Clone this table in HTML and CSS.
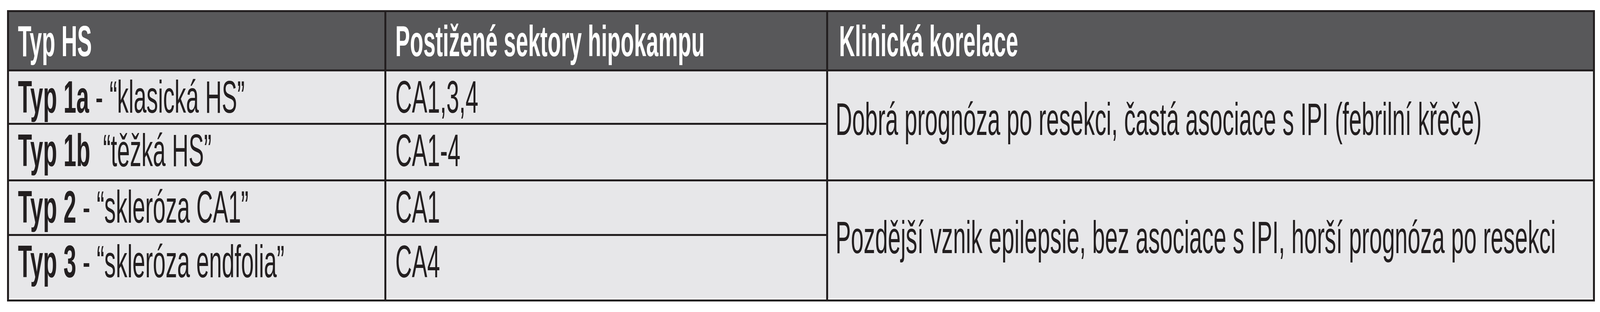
FILE: index.html
```html
<!DOCTYPE html>
<html lang="cs">
<head>
<meta charset="utf-8">
<title>Typy HS</title>
<link rel="stylesheet" href="styles.css">
</head>
<body>
<div class="table">
  <div class="cell head c1"><span class="t">Typ HS</span></div>
  <div class="cell head c2"><span class="t">Postižené sektory hipokampu</span></div>
  <div class="cell head c3"><span class="t">Klinická korelace</span></div>

  <div class="cell c1"><span class="t"><b>Typ 1a</b> - “klasická HS”</span></div>
  <div class="cell c2"><span class="t">CA1,3,4</span></div>
  <div class="cell c3 merged top"><span class="t">Dobrá prognóza po resekci, častá asociace s IPI (febrilní křeče)</span></div>

  <div class="cell c1"><span class="t"><b>Typ 1b</b>&nbsp; “těžká HS”</span></div>
  <div class="cell c2"><span class="t">CA1-4</span></div>

  <div class="cell c1"><span class="t"><b>Typ 2</b> - “skleróza CA1”</span></div>
  <div class="cell c2"><span class="t">CA1</span></div>
  <div class="cell c3 merged bottom last"><span class="t">Pozdější vznik epilepsie, bez asociace s IPI, horší prognóza po resekci</span></div>

  <div class="cell c1 last"><span class="t"><b>Typ 3</b> - “skleróza endfolia”</span></div>
  <div class="cell c2 last"><span class="t">CA4</span></div>
</div>
</body>
</html>
```

FILE: styles.css
```css
:root {
  --vr: 1;
}

@media (max-width: 6700px) {
  :root { --vr: 0.8; }
}

@media (max-width: 5500px) {
  :root { --vr: 0.7; }
}

@media (max-width: 4200px) {
  :root { --vr: 0.6072; }
}

html, body {
  margin: 0;
  padding: 0;
  background: #ffffff;
}

body {
  font-family: "Liberation Sans", Arial, sans-serif;
  color: #231f20;
}

.table {
  display: grid;
  grid-template-columns: 1586fr 1858fr 3230fr;
  grid-template-rows: 147px 132px 140px 135px 163px;
  gap: 5px;
  padding: 5px;
  box-sizing: border-box;
  width: 99.23vw;
  margin: 26px 0 0 0.445vw;
  background: #231f20;
}

.cell {
  background: #e7e7e9;
  font-size: 116px;
  line-height: 1;
  white-space: nowrap;
  padding: 8px 0 0 0.563vw;
  box-sizing: border-box;
  min-width: 0;
  overflow: hidden;
}

.t {
  display: inline-block;
  transform-origin: 0 0;
  transform: scaleX(calc(0.835 * var(--vr)));
}

.cell b {
  font-weight: 700;
}

.head {
  background: #58585a;
  color: #ffffff;
  font-size: 112px;
  font-weight: 700;
  padding-top: 19px;
}

.head .t {
  transform: scaleX(calc(0.825 * var(--vr)));
}

.head.c3 {
  padding-left: 0.667vw;
}

.merged {
  grid-column: 3;
  padding-left: 0.445vw;
}

.merged.top {
  grid-row: 2 / span 2;
  padding-top: 65px;
}

.merged.bottom {
  grid-row: 4 / span 2;
  padding-top: 86px;
}

.last {
  box-shadow: inset 0 -4px 0 #fafafa;
}
```
